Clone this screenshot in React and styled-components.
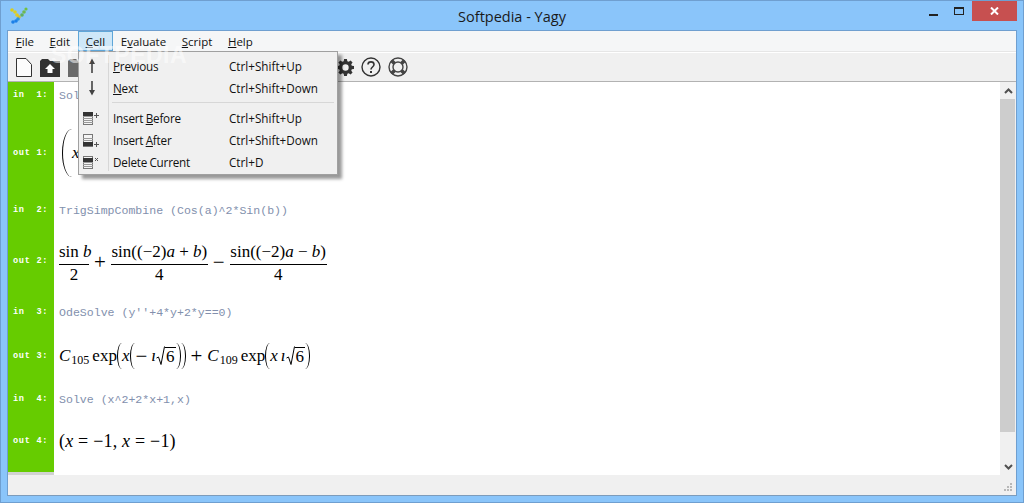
import React from 'react'
import styled, { createGlobalStyle } from 'styled-components'

const Global = createGlobalStyle`
  html, body { margin: 0; padding: 0; height: 100%; overflow: hidden; }
  body { font-family: 'Open Sans', 'Noto Sans', sans-serif; }
`

const Window = styled.div`
  width: 1024px;
  height: 503px;
  box-sizing: border-box;
  background: #8ac5fa;
  border: 1px solid #6f9fd0;
  display: flex;
  flex-direction: column;
  position: relative;
  overflow: hidden;
`
const TitleBar = styled.div`
  height: 29px;
  flex: none;
  position: relative;
  display: flex;
  align-items: center;
  justify-content: center;
  font-size: 14.5px;
  color: #1a1a1a;
  padding-top: 1px;
  box-sizing: border-box;
`
const AppIcon = styled.svg`
  position: absolute;
  left: 9px;
  top: 6px;
`
const Controls = styled.div`
  position: absolute;
  right: 6px;
  top: 0;
  display: flex;
  align-items: stretch;
  height: 20px;
`
const Control = styled.div`
  width: ${p => (p.$close ? '45px' : '26px')};
  display: flex;
  align-items: center;
  justify-content: center;
  background: ${p => (p.$close ? '#c75050' : 'transparent')};
`
const MinBar = styled.svg`
  margin-top: 8px;
`
const Client = styled.div`
  flex: 1;
  margin: 0 6px 6px 6px;
  border: 1px solid #6f9fd0;
  border-bottom-color: #7d9cbb;
  background: #f0f0f0;
  display: flex;
  flex-direction: column;
  position: relative;
  min-height: 0;
`
const MenuBar = styled.div`
  height: 21px;
  flex: none;
  box-sizing: border-box;
  background: #f5f6f7;
  border-bottom: 1px solid #e6e6e6;
  display: flex;
  font-size: 11.5px;
  color: #111;
`
const MenuItem = styled.div`
  box-sizing: border-box;
  height: 20px;
  padding: 0 7.8px;
  display: flex;
  align-items: center;
  background: ${p => (p.$open ? '#cee7f8' : 'transparent')};
  box-shadow: ${p => (p.$open ? 'inset 0 0 0 1px #5fa6d8' : 'none')};
`
const Toolbar = styled.div`
  height: 30px;
  flex: none;
  box-sizing: border-box;
  background: #f0f0f0;
  border-top: 1px solid #fff;
  border-bottom: 1px solid #b2b2b2;
  display: flex;
  align-items: center;
  padding-left: 7px;
  gap: 7px;
`
const ToolGap = styled.div`
  width: 234px;
`
const Sheet = styled.div`
  flex: 1;
  min-height: 0;
  display: flex;
`
const Cells = styled.div`
  flex: 1;
  background: #fff;
  display: grid;
  grid-template-rows: 24px 92px 22px 80px 22px 66px 20px 64px 3px;
  grid-template-columns: 46px 1fr;
  align-content: start;
`
const Label = styled.div`
  background: #66cc00;
  color: #fff;
  font-family: 'Liberation Mono', monospace;
  font-weight: bold;
  font-size: 8.6px;
  letter-spacing: 0.7px;
  white-space: pre;
  display: flex;
  align-items: center;
  padding: 2px 0 0 5px;
`
const Foot = styled.div`
  background: #d2d2d2;
`
const Content = styled.div`
  display: flex;
  align-items: center;
  padding: 2px 0 0 5px;
  min-width: 0;
`
const Code = styled.span`
  font-family: 'Liberation Mono', monospace;
  font-size: 11.57px;
  color: #8290ad;
  white-space: pre;
`
const Math = styled.div`
  font-family: 'Liberation Serif', serif;
  font-size: ${p => p.$size || 17}px;
  letter-spacing: ${p => p.$spacing || 0}px;
  padding-top: ${p => p.$drop || 0}px;
  color: #000;
  display: flex;
  align-items: center;
  white-space: pre;
`
const I = styled.i`
  font-style: italic;
  margin-left: ${p => p.$before || 0}px;
`
const Fraction = styled.span`
  display: inline-flex;
  flex-direction: column;
  align-items: stretch;
  text-align: center;
  width: ${p => p.$width}px;
`
const Top = styled.span`
  border-bottom: 1px solid #000;
  line-height: 22px;
  padding-bottom: 1px;
`
const Bottom = styled.span`
  line-height: 20px;
`
const Op = styled.span`
  font-size: 21px;
  line-height: 1;
  margin: 0 ${p => p.$gap ?? 5}px;
`
const Paren = styled.span`
  display: inline-block;
  flex: none;
  box-sizing: border-box;
  width: ${p => p.$width || 5}px;
  height: ${p => p.$height || 26}px;
  margin-left: ${p => p.$left || 0}px;
  border-style: solid;
  border-color: #000;
  border-width: ${p => (p.$close ? '0 1.2px 0 0' : '0 0 0 1.2px')};
  border-radius: ${p => (p.$close ? '0 100% 100% 0 / 0 50% 50% 0' : '100% 0 0 100% / 50% 0 0 50%')};
`
const Sub = styled.span`
  font-size: 12px;
  align-self: flex-end;
  margin: 0 3px 0 1px;
  line-height: 18px;
`
const Radical = styled.span`
  display: inline-flex;
  align-items: flex-end;
`
const Radicand = styled.span`
  border-top: 1px solid #000;
  line-height: 18px;
  padding: 0 1px;
`
const Scrollbar = styled.div`
  width: 16px;
  flex: none;
  background: #f0f0f0;
  display: flex;
  flex-direction: column;
`
const ScrollArrow = styled.div`
  height: 17px;
  flex: none;
  display: flex;
  align-items: center;
  justify-content: center;
`
const Thumb = styled.div`
  height: 333px;
  background: #cdcdcd;
  margin-right: 1px;
  flex: none;
`
const Track = styled.div`
  flex: 1;
`
const StatusBar = styled.div`
  height: 20px;
  flex: none;
  background: #f0f0f0;
  position: relative;
`
const Grip = styled.svg`
  position: absolute;
  right: 3px;
  bottom: 2px;
`
const Menu = styled.div`
  position: absolute;
  left: 70px;
  top: 20px;
  width: 260px;
  height: 124px;
  box-sizing: border-box;
  background: #f0f0f0;
  border: 1px solid #a0a0a0;
  box-shadow: 4px 4px 3px rgba(0, 0, 0, 0.4);
  padding: 3px 2px;
  font-size: 11.7px;
  color: #111;
  z-index: 3;
`
const Gutter = styled.div`
  position: absolute;
  left: 29px;
  top: 3px;
  bottom: 3px;
  width: 1px;
  background: #d7d7d7;
`
const Row = styled.div`
  height: 22px;
  display: flex;
  align-items: center;
`
const RowIcon = styled.div`
  width: 30px;
  box-sizing: border-box;
  padding-right: 9px;
  flex: none;
  display: flex;
  justify-content: center;
`
const RowLabel = styled.div`
  width: 116px;
  flex: none;
  padding-left: 2px;
  letter-spacing: -0.2px;
  word-spacing: -0.5px;
`
const Separator = styled.div`
  height: 1px;
  background: #d7d7d7;
  margin: 3px 1px 4px 31px;
`
const Watermark = styled.div`
  position: absolute;
  left: 50px;
  top: 41px;
  font-family: 'Liberation Sans', sans-serif;
  font-weight: bold;
  font-size: 23px;
  letter-spacing: 0.5px;
  color: rgba(255, 255, 255, 0.55);
  z-index: 4;
  pointer-events: none;
`

const Logo = () => (
  <AppIcon width="18" height="18" viewBox="0 0 18 18">
    <circle cx="2" cy="3" r="1.800" fill="#d8cc20" />
    <circle cx="5" cy="5" r="1.800" fill="#e0d020" />
    <circle cx="7" cy="8" r="1.800" fill="#e8cc18" />
    <circle cx="9" cy="10" r="1.800" fill="#d8c030" />
    <circle cx="16" cy="2" r="1.600" fill="#70c040" />
    <circle cx="14" cy="5" r="1.800" fill="#70b850" />
    <circle cx="12" cy="8" r="1.800" fill="#60b060" />
    <circle cx="8" cy="12" r="1.800" fill="#2c94e0" />
    <circle cx="6" cy="14" r="1.800" fill="#1c80e8" />
    <circle cx="3" cy="15" r="1.800" fill="#1c80e8" />
  </AppIcon>
)
const NewDoc = () => (
  <svg width="18" height="21" viewBox="0 0 18 21" fill="#fcfcfc" stroke="#333" strokeWidth="1">
    <path d="M1.500 1.500H11L16.500 7.500V19.500H1.500Z" />
  </svg>
)
const Folder = ({ color, arrow }) => (
  <svg width="21" height="19" viewBox="0 0 21 19">
    <path d="M0 3L2 1H8L10 3H20V19H0Z" fill={color} />
    {arrow && <path d="M10 6L15 11H12.500V15H7.500V11H5Z" fill="#fff" />}
  </svg>
)
const Gear = () => (
  <svg width="17" height="19" viewBox="0 0 24 24" fill="#333">
    <path d="M10 0h4l.6 3.100 1.900.8L19.200 2 22 4.800l-1.900 2.700.8 1.900L24 10v4l-3.100.6-.8 1.900 1.900 2.700L19.200 22l-2.700-1.900-1.900.8L14 24h-4l-.6-3.100-1.900-.8L4.800 22 2 19.200l1.900-2.700-.8-1.900L0 14v-4l3.100-.6.800-1.900L2 4.800 4.800 2l2.700 1.900 1.900-.8zM12 7.500a4.500 4.500 0 1 0 0 9 4.500 4.500 0 0 0 0-9z" fillRule="evenodd" />
  </svg>
)
const Help = () => (
  <svg width="20" height="20" viewBox="0 0 20 20" fill="none" stroke="#333">
    <circle cx="10" cy="10" r="9" strokeWidth="1.400" />
    <path d="M7 7.500C7 4 13 4 13 7.500 13 10 10 10 10 12.500" strokeWidth="1.600" />
    <rect x="9" y="14" width="2" height="2" fill="#333" stroke="none" />
  </svg>
)
const Buoy = () => (
  <svg width="20" height="20" viewBox="0 0 20 20" fill="none" stroke="#444">
    <circle cx="10" cy="10" r="9" strokeWidth="1.400" />
    <circle cx="10" cy="10" r="5" strokeWidth="1.400" />
    <path d="M3.500 3.500L6.500 6.500M16.500 3.500L13.500 6.500M3.500 16.500L6.500 13.500M16.500 16.500L13.500 13.500" strokeWidth="3.600" />
  </svg>
)
const ArrowUp = () => (
  <svg width="8" height="16" viewBox="0 0 8 16" fill="#444">
    <path d="M4 0.500L7 6H4.800V15H3.200V6H1Z" />
  </svg>
)
const ArrowDown = () => (
  <svg width="8" height="16" viewBox="0 0 8 16" fill="#444">
    <path d="M4 15.500L7 10H4.800V1H3.200V10H1Z" />
  </svg>
)
const TableIcon = ({ dark, mark }) => (
  <svg width="17" height="14" viewBox="0 0 17 14" fill="none">
    <rect x="0.500" y="1.500" width="9" height="12" fill="#f4f4f4" stroke="#777" />
    <path d="M0 5.500H10M0 7.500H10M0 9.500H10M0 11.500H10" stroke="#999" />
    <rect x="0" y={dark} width="10" height="4" fill="#333" />
    <path d={mark} stroke="#555" />
  </svg>
)

const Out1 = () => (
  <Math>
    <Paren $width={10} $height={48} $left={3} />
    <I>x</I>
  </Math>
)
const Out2 = () => (
  <Math $drop={3}>
    <Fraction $width={30}>
      <Top>sin <I>b</I></Top>
      <Bottom>2</Bottom>
    </Fraction>
    <Op>+</Op>
    <Fraction $width={97}>
      <Top>sin((−2)<I>a</I> + <I>b</I>)</Top>
      <Bottom>4</Bottom>
    </Fraction>
    <Op>−</Op>
    <Fraction $width={97}>
      <Top>sin((−2)<I>a</I> − <I>b</I>)</Top>
      <Bottom>4</Bottom>
    </Fraction>
  </Math>
)
const Root = () => (
  <Radical>
    <svg width="9" height="20" viewBox="0 0 9 20" fill="none" stroke="#000">
      <path d="M0.500 12L2.500 11L5 18.500L8.500 0.500" />
    </svg>
    <Radicand>6</Radicand>
  </Radical>
)
const Out3 = () => (
  <Math>
    <I>C</I><Sub>105</Sub>exp<Paren /><I>x</I><Paren $left={1} />
    <Op $gap={0}>−</Op>
    <I $before={4}>ı</I><Root /><Paren $close /><Paren $close />
    <Op>+</Op>
    <I>C</I><Sub>109</Sub>exp<Paren /><I>x</I><I $before={3}>ı</I><Root /><Paren $close />
  </Math>
)
const Out4 = () => (
  <Math $size={18} $spacing={0.2}>
    (<I>x</I> = −1, <I>x</I> = −1)
  </Math>
)

export default function App() {
  return (
    <Window>
      <Global />
      <TitleBar>
        <Logo />
        Softpedia - Yagy
        <Controls>
          <Control>
            <MinBar width="9" height="3"><rect width="9" height="2" fill="#222" /></MinBar>
          </Control>
          <Control>
            <svg width="10" height="8" viewBox="0 0 10 8" fill="none"><rect x="0.500" y="0.500" width="9" height="7" stroke="#222" /><rect width="10" height="2" fill="#222" /></svg>
          </Control>
          <Control $close>
            <svg width="9" height="8" viewBox="0 0 9 8" stroke="#fff" strokeWidth="2"><path d="M1 0.500L8 7.500M8 0.500L1 7.500" /></svg>
          </Control>
        </Controls>
      </TitleBar>
      <Client>
        <MenuBar>
          <MenuItem><u>F</u>ile</MenuItem>
          <MenuItem><u>E</u>dit</MenuItem>
          <MenuItem $open><u>C</u>ell</MenuItem>
          <MenuItem>E<u>v</u>aluate</MenuItem>
          <MenuItem><u>S</u>cript</MenuItem>
          <MenuItem><u>H</u>elp</MenuItem>
        </MenuBar>
        <Toolbar>
          <NewDoc />
          <Folder color="#333" arrow />
          <Folder color="#6a6a6a" />
          <ToolGap />
          <Gear />
          <Help />
          <Buoy />
        </Toolbar>
        <Sheet>
          <Cells>
            <Label>in  1:</Label>
            <Content><Code>Solve</Code></Content>
            <Label>out 1:</Label>
            <Content><Out1 /></Content>
            <Label>in  2:</Label>
            <Content><Code>TrigSimpCombine (Cos(a)^2*Sin(b))</Code></Content>
            <Label>out 2:</Label>
            <Content><Out2 /></Content>
            <Label>in  3:</Label>
            <Content><Code>OdeSolve (y''+4*y+2*y==0)</Code></Content>
            <Label>out 3:</Label>
            <Content><Out3 /></Content>
            <Label>in  4:</Label>
            <Content><Code>Solve (x^2+2*x+1,x)</Code></Content>
            <Label>out 4:</Label>
            <Content><Out4 /></Content>
            <Foot />
          </Cells>
          <Scrollbar>
            <ScrollArrow>
              <svg width="9" height="6" viewBox="0 0 9 6" fill="none" stroke="#505050" strokeWidth="2"><path d="M1 5L4.500 1.500L8 5" /></svg>
            </ScrollArrow>
            <Thumb />
            <Track />
            <ScrollArrow>
              <svg width="9" height="6" viewBox="0 0 9 6" fill="none" stroke="#505050" strokeWidth="2"><path d="M1 1L4.500 4.500L8 1" /></svg>
            </ScrollArrow>
          </Scrollbar>
        </Sheet>
        <StatusBar>
          <Grip width="10" height="10" viewBox="0 0 10 10" fill="#b8b8b8">
            <rect x="7" y="0" width="2" height="2" />
            <rect x="4" y="3" width="2" height="2" />
            <rect x="7" y="3" width="2" height="2" />
            <rect x="1" y="6" width="2" height="2" />
            <rect x="4" y="6" width="2" height="2" />
            <rect x="7" y="6" width="2" height="2" />
          </Grip>
        </StatusBar>
        <Menu>
          <Gutter />
          <Row><RowIcon><ArrowUp /></RowIcon><RowLabel><u>P</u>revious</RowLabel>Ctrl+Shift+Up</Row>
          <Row><RowIcon><ArrowDown /></RowIcon><RowLabel><u>N</u>ext</RowLabel>Ctrl+Shift+Down</Row>
          <Separator />
          <Row><RowIcon><TableIcon dark={1} mark="M11 4.500H16M13.500 2V7" /></RowIcon><RowLabel>Insert <u>B</u>efore</RowLabel>Ctrl+Shift+Up</Row>
          <Row><RowIcon><TableIcon dark={9} mark="M11 11.500H16M13.500 9V14" /></RowIcon><RowLabel>Insert <u>A</u>fter</RowLabel>Ctrl+Shift+Down</Row>
          <Row><RowIcon><TableIcon dark={3} mark="M12 3L15 6M15 3L12 6" /></RowIcon><RowLabel>Delete Current</RowLabel>Ctrl+D</Row>
        </Menu>
      </Client>
      <Watermark>SOFTPEDIA</Watermark>
    </Window>
  )
}
